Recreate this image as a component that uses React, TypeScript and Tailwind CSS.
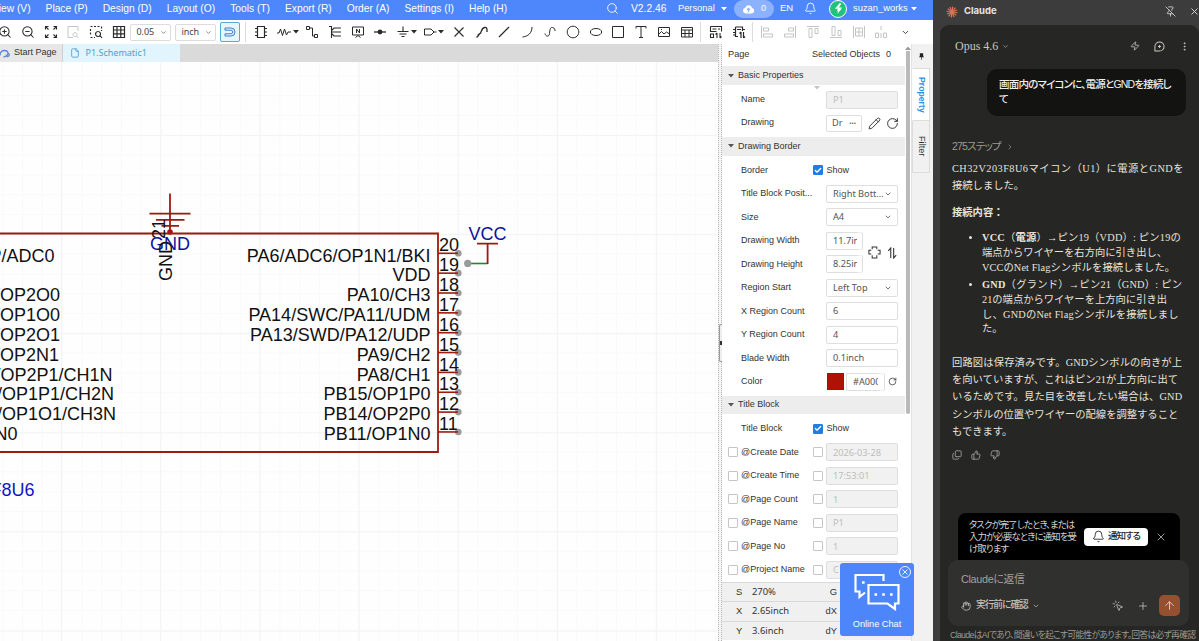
import type { ReactNode } from "react";
import clsx from "clsx";
import {
  ArrowUp,
  Bell,
  Check,
  ChevronDown,
  ChevronRight,
  Copy,
  EllipsisVertical,
  File,
  Hand,
  Maximize,
  MousePointerClick,
  Pencil,
  PinOff,
  Plus,
  RotateCw,
  Search,
  ThumbsDown,
  ThumbsUp,
  X,
  Zap,
  ZoomIn,
  ZoomOut,
} from "lucide-react";

const MENUS = [
  "View (V)",
  "Place (P)",
  "Design (D)",
  "Layout (O)",
  "Tools (T)",
  "Export (R)",
  "Order (A)",
  "Settings (I)",
  "Help (H)",
];

const ROW = 19.85;

const LEFT_PINS = [
  { row: 0, name: "P/ADC0", end: 54.5 },
  { row: 2, name: "P/OP2O0", end: 60 },
  { row: 3, name: "P/OP1O0", end: 60 },
  { row: 4, name: "P/OP2O1", end: 60 },
  { row: 5, name: "P/OP2N1", end: 59 },
  { row: 6, name: "/OP2P1/CH1N", end: 112.5 },
  { row: 7, name: "/OP1P1/CH2N", end: 114 },
  { row: 8, name: "/OP1O1/CH3N", end: 116 },
  { row: 9, name: "1N0", end: 17.5 },
];

const RIGHT_PINS = [
  { no: 20, name: "PA6/ADC6/OP1N1/BKI" },
  { no: 19, name: "VDD" },
  { no: 18, name: "PA10/CH3" },
  { no: 17, name: "PA14/SWC/PA11/UDM" },
  { no: 16, name: "PA13/SWD/PA12/UDP" },
  { no: 15, name: "PA9/CH2" },
  { no: 14, name: "PA8/CH1" },
  { no: 13, name: "PB15/OP1P0" },
  { no: 12, name: "PB14/OP2P0" },
  { no: 11, name: "PB11/OP1N0" },
];

const TITLE_FIELDS = [
  { label: "@Create Date", value: "2026-03-28" },
  { label: "@Create Time", value: "17:53:01" },
  { label: "@Page Count", value: "1" },
  { label: "@Page Name", value: "P1" },
  { label: "@Page No", value: "1" },
  { label: "@Project Name", value: "C" },
];

function Caret({ className }: { className?: string }) {
  return (
    <svg viewBox="0 0 6 4" className={clsx("h-[4px] w-[6px] shrink-0", className)}>
      <path d="M0 0h6L3 3.6z" fill="currentColor" />
    </svg>
  );
}

function MenuBar() {
  return (
    <div className="flex h-5 shrink-0 items-center bg-[#4e86fb] pb-[3px] text-[10.3px] text-white">
      <div className="-ml-[8px] flex w-[614px] shrink-0 gap-[15px] text-[10.25px] whitespace-nowrap">
        {MENUS.map((m) => (
          <span key={m}>{m}</span>
        ))}
      </div>
      <Search className="h-[13px] w-[13px] shrink-0" strokeWidth={1.6} />
      <span className="ml-[12px] w-[47px] shrink-0">V2.2.46</span>
      <span className="w-[43px] shrink-0 text-[9.3px]">Personal</span>
      <Caret className="mr-[7px]" />
      <div className="flex h-[18px] w-[40px] shrink-0 items-center justify-center gap-[6px] rounded-full bg-[#8db2fd] text-[9px]">
        <svg viewBox="0 0 14 11" className="h-[10px] w-[13px]">
          <path d="M4 10.5a3.3 3.3 0 0 1-.6-6.5A4 4 0 0 1 11 4.4a3.1 3.1 0 0 1-.6 6.1z" fill="#fff" />
          <path d="M7 9V5M5.3 6.500 7 4.800l1.700 1.700" stroke="#8db2fd" strokeWidth="1.200" fill="none" />
        </svg>
        0
      </div>
      <span className="ml-[6px] w-[24px] shrink-0 text-[9.5px]">EN</span>
      <Bell className="h-[13px] w-[13px] shrink-0" strokeWidth={1.6} />
      <div className="ml-[12px] flex h-[18px] w-[18px] shrink-0 items-center justify-center rounded-full border border-white bg-[#1fc47c]">
        <svg viewBox="0 0 10 12" className="h-[11px] w-[9px]">
          <path d="M6.500 0 1 6.200h3.200L3 9.200 9 5H5.500L8 .800zM5 7.500 3.500 12 9 5.800z" fill="#fff" />
        </svg>
      </div>
      <span className="ml-[6px] w-[58px] shrink-0 text-[9.4px]">suzan_works</span>
      <Caret />
    </div>
  );
}

function Tool({ children, faded }: { children: ReactNode; faded?: boolean }) {
  return (
    <div
      className={clsx(
        "flex w-[22.8px] shrink-0 items-center justify-center",
        faded ? "text-[#c4c4c4]" : "text-[#2a2a2a]"
      )}
    >
      {children}
    </div>
  );
}

function Glyph({ d, w = 1 }: { d: string; w?: number }) {
  return (
    <svg
      viewBox="0 0 14 14"
      className="h-[14px] w-[14px] shrink-0"
      fill="none"
      stroke="currentColor"
      strokeWidth={w}
    >
      <path d={d} />
    </svg>
  );
}

function Divider() {
  return <div className="h-[20px] w-px shrink-0 bg-[#dcdcdc]" />;
}

function ToolSelect({ value }: { value: string }) {
  return (
    <div className="mr-[4px] flex h-[17px] w-[41px] shrink-0 items-center justify-between rounded-[2px] border border-[#dcdcdc] pr-[3px] pl-[5px] font-['Noto_Sans',sans-serif] text-[9px] text-[#444]">
      {value}
      <ChevronDown className="h-[7px] w-[7px]" />
    </div>
  );
}

function Toolbar() {
  return (
    <div className="flex h-6 shrink-0 items-center bg-white">
      <div className="-ml-[6.4px] flex">
        <Tool>
          <ZoomIn className="h-[14px] w-[14px]" strokeWidth={1.8} />
        </Tool>
        <Tool>
          <ZoomOut className="h-[14px] w-[14px]" strokeWidth={1.8} />
        </Tool>
        <Tool>
          <Glyph d="M1.500 4.500v-3h3M2 2l2.500 2.500M9.500 1.500h3v3M12 2 9.500 4.500M1.500 9.500v3h3M2 12l2.500-2.500M12.500 9.500v3h-3M12 12 9.500 9.500" w={1.1} />
        </Tool>
        <Tool faded>
          <Glyph d="M12 6V1.500H2v11h5M9 7.500a2 2 0 1 0 .1 0M10.500 11l2 2" />
        </Tool>
        <Tool>
          <Glyph d="M1.500 1.500h2M5 1.500h2M8.500 1.500h2M12.500 1.500v2M1.500 4v2M1.500 7.500v2M12.500 5v1M1.500 12.500h2M5 12.500h1M9 6.500a2.500 2.500 0 1 0 .1 0M11 10.500l2 2.500" w={1.2} />
        </Tool>
        <Tool>
          <Glyph d="M1.500 1.500h11v11h-11zM1.500 5h11M1.500 8.800h11M5 1.500v11M8.800 1.500v11" w={1.2} />
        </Tool>
      </div>
      <ToolSelect value="0.05" />
      <ToolSelect value="inch" />
      <div className="flex h-[20px] w-[20px] shrink-0 items-center justify-center rounded-[2px] border border-[#58a9d8] bg-[#e8f5fd] text-[#3b7fd0]">
        <Glyph d="M2 3h6a4 4 0 0 1 0 8H2V8.800h6a1.800 1.800 0 0 0 0-3.600H2z" />
      </div>
      <div className="ml-[5px]">
        <Divider />
      </div>
      <div className="ml-[3px] flex">
        <Tool>
          <Glyph d="M3.500 1.500h7v11h-7zM1 3.500h2.500M1 7h2.500M1 10.500h2.500M10.500 3.500H13M10.500 7H13M10.500 10.500H13" w={1.2} />
        </Tool>
        <div className="flex w-[28.5px] items-center gap-[2px] pl-[4.4px] text-[#2a2a2a]">
          <Glyph d="M0 8h2l1.500-4 2 6.500L7.500 4l2 6 1.500-3h3" />
          <Caret />
        </div>
        <Tool>
          <Glyph d="M1.500 1.500h3v3h-3zM9.500 9.500h3v3h-3zM4.500 3h3v8h2" />
        </Tool>
        <Tool>
          <Glyph d="M3.500 1v12M3.500 5.500 6 3h7M3.500 7h9.500M3.500 8.500 6 11h7M1 1.500h2.500" w={1.1} />
        </Tool>
        <Tool>
          <Glyph d="M1.500 2h11v8h-11zM4.500 12.500 7 10.500l2.500 2M5.500 8V4l3 4V4" />
        </Tool>
        <Tool>
          <svg viewBox="0 0 14 14" className="h-[14px] w-[14px]">
            <path d="M1 7h12" stroke="currentColor" strokeWidth="1.300" />
            <circle cx="7" cy="7" r="2.400" fill="currentColor" />
          </svg>
        </Tool>
        <div className="flex w-[26.5px] items-center gap-[1px] pl-[4px] text-[#2a2a2a]">
          <Glyph d="M7 1.500V6M1.500 6.500h11M3.500 9h7M5.500 11.500h3" w={1.1} />
          <Caret />
        </div>
        <div className="flex w-[29px] items-center gap-[1px] pl-[4.4px] text-[#2a2a2a]">
          <Glyph d="M1.500 4H8l3 3-3 3H1.500zM11 7h2.500" />
          <Caret />
        </div>
        <Tool>
          <Glyph d="m2.500 2.500 9 9m0-9-9 9" w={1.1} />
        </Tool>
        <Tool>
          <Glyph d="M1.500 12.500 4 10m-1.500.5L5.500 8c1-1 1-5 4-5.500S12 5 12 7M4 9.500l2-2" w={1.3} />
        </Tool>
        <Tool>
          <Glyph d="m2 12 10-10" w={1.2} />
        </Tool>
        <Tool>
          <Glyph d="M12 2c0 6-4 9.500-9.500 10" />
        </Tool>
        <Tool>
          <Glyph d="M2 8.500c.5 3 4 4 4.500 0S7 2 9.500 2.500 12 5 12 6" />
        </Tool>
        <Tool>
          <Glyph d="M7 1.200a5.800 5.800 0 1 0 .01 0z" />
        </Tool>
        <Tool>
          <Glyph d="M7 3.500c-7.500 0-7.500 7 0 7s7.500-7 0-7z" />
        </Tool>
        <Tool>
          <Glyph d="M1.500 1.500h11v11h-11z" />
        </Tool>
        <Tool>
          <Glyph d="M2 3.500v-2h10v2M7 1.500v11M5 12.500h4" />
        </Tool>
        <Tool>
          <Glyph d="M1.500 2.500h11v9h-11zM1.500 9.500l3-3 2.500 2.500 2.500-2 3 2M4 4.500h1" />
        </Tool>
        <Tool>
          <Glyph d="M1.500 2.500h11v9.500h-11zM1.500 5h11M1.500 8.500h11M5 5v7M9 5v7" />
        </Tool>
      </div>
      <div className="mr-[3px] ml-[2.200px]">
        <Divider />
      </div>
      <Tool>
        <Glyph d="M1.500 1.500h11v5M1.500 1.500v5h6M3.500 4h4M9 4h2M1.500 9h3v3.500h-3zM8 8v5M8 8 6.500 9.500M11 8v5M11 13l1.500-1.500" w={1.1} />
      </Tool>
      <Tool>
        <Glyph d="M3.500 2h7v4M3.500 2v9.500H6M1 4.500h2.500M1 7.500h2.500M1 10h2.500M10.500 4.500H13M5 4.500h4M9 7v6M9 7 7.500 8.500M11.500 7v6M11.500 13l1.500-1.500" w={1.2} />
      </Tool>
      <div className="mr-[3px] ml-[2px]">
        <Divider />
      </div>
      <Tool faded>
        <Glyph d="M1.500 1v12M3.500 3h5v3h-5zM3.500 9h9v3h-9z" />
      </Tool>
      <Tool faded>
        <Glyph d="M12.500 1v12M5.500 3h5v3h-5zM1.500 9h9v3h-9z" />
      </Tool>
      <Tool faded>
        <Glyph d="M1 1.500h12M3 3.500h3v9H3zM9 3.500h3v5H9z" />
      </Tool>
      <Tool faded>
        <Glyph d="M1 12.500h12M3 1.500h3v9H3zM9 5.500h3v5H9z" />
      </Tool>
      <Tool faded>
        <Glyph d="M1.500 1v12M12.500 1v12M3.500 3h7v8h-7zM3.500 7h7M7 3v8" />
      </Tool>
      <Tool faded>
        <Glyph d="M1.500 8h3v4.500h-3zM9.500 8h3v4.500h-3zM7 1v4M7 8v5" />
      </Tool>
      <ChevronDown className="ml-[8px] h-[9px] w-[9px] shrink-0 text-[#333]" strokeWidth={2.5} />
    </div>
  );
}

function Tabs() {
  return (
    <div className="flex h-[18px] bg-[#dadada] text-[9px]">
      <div className="flex w-[63px] items-center gap-[4px] border-r border-[#cfcfcf] bg-[#e7e7e7] text-[#333]">
        <svg viewBox="0 0 10 9" className="h-[9px] w-[10px]" fill="none" stroke="#5b86d8" strokeWidth="1.300">
          <path d="M0 6.500C0 3 2 1.500 4.500 1.500S8 3 8 4.500 5 8 3.500 8M6.500 7.500c4 .5 3-4 1-3" />
        </svg>
        Start Page
      </div>
      <div className="flex w-[117px] items-center gap-[6px] bg-[#e2f4fe] pl-[6.500px] font-['Noto_Sans',sans-serif] text-[#4b9fd2]">
        <File className="h-[12px] w-[10px]" strokeWidth={2} />
        P1.Schematic1
      </div>
    </div>
  );
}

function Schematic() {
  return (
    <svg
      viewBox="0 62 718 579"
      className="h-[579px] w-[718px] bg-[#fefefe] font-['Liberation_Sans',Arial,sans-serif] text-[18px]"
    >
      <defs>
        <pattern id="minor" x="2.200" y="16" width="19.800" height="19.800" patternUnits="userSpaceOnUse">
          <path d="M.5 0v19.800M0 .5h19.800" stroke="#f9f9fa" />
        </pattern>
        <pattern id="major" x="61" y="36" width="99.200" height="99.100" patternUnits="userSpaceOnUse">
          <path d="M.5 0v99.100M0 .5h99.200" stroke="#f1f3f4" />
        </pattern>
      </defs>
      <rect y="62" width="718" height="579" fill="url(#minor)" />
      <rect y="62" width="718" height="579" fill="url(#major)" />

      {/* chip body */}
      <path d="M-2 233.500H438V452H-2" fill="none" stroke="#9e1a10" strokeWidth="1.800" />

      {RIGHT_PINS.map((pin, i) => (
        <g key={pin.no}>
          <circle cx="458.300" cy={253.3 + i * ROW} r="3.300" fill="#9a9a9a" />
          <path d={`M438 ${253.3 + i * ROW}h20`} stroke="#9e1a10" strokeWidth="1.600" />
          <text x="439" y={251.4 + i * ROW} fill="#111">
            {pin.no}
          </text>
          <text x="430.500" y={261.5 + i * ROW} textAnchor="end" fill="#111">
            {pin.name}
          </text>
        </g>
      ))}
      {LEFT_PINS.map((pin) => (
        <text key={pin.row} x={pin.end} y={261.5 + pin.row * ROW} textAnchor="end" fill="#111">
          {pin.name}
        </text>
      ))}

      {/* GND flag */}
      <path
        d="M170 193.500V232M149.500 213.600h41M156 219.800h28.500M161.500 225.800h17.500"
        stroke="#9e1a10"
        strokeWidth="1.800"
      />
      <circle cx="170" cy="232" r="2.800" fill="#9e1a10" />
      <text x="150" y="250" fill="#10109c">
        GND
      </text>
      <text transform="translate(164.500 239) rotate(-90)" fill="#111">
        21
      </text>
      <text transform="translate(172 281) rotate(-90)" fill="#111">
        GND
      </text>

      {/* VCC flag */}
      <path d="M468 263.500h19.500" stroke="#1c8a35" strokeWidth="1.600" />
      <circle cx="467.700" cy="263.400" r="3.600" fill="#9a9a9a" />
      <path d="M477 243.600h21M487.600 243.600v20.500" stroke="#9e1a10" strokeWidth="1.800" />
      <text x="468.500" y="240" fill="#10109c">
        VCC
      </text>

      <text x="34.500" y="495.500" textAnchor="end" fill="#1414c8">
        CH32V203F8U6
      </text>
    </svg>
  );
}

function Section({ title }: { title: string }) {
  return (
    <div className="mt-[2.200px] mb-[2.900px] flex h-[18.600px] items-center gap-[4px] bg-[#ededed] pl-[6px]">
      <Caret className="text-[#555]" />
      {title}
    </div>
  );
}

function Box({ on }: { on?: boolean }) {
  return (
    <span
      className={clsx(
        "flex h-[10px] w-[10px] shrink-0 items-center justify-center rounded-[1px] border",
        on ? "border-[#1b7fe6] bg-[#1b7fe6]" : "border-[#c6c6c6] bg-white"
      )}
    >
      {on && <Check className="h-[9px] w-[9px] text-white" strokeWidth={4} />}
    </span>
  );
}

function Field({ label, children }: { label: string; children: ReactNode }) {
  return (
    <div className="flex h-[23.5px] items-center pl-[19px]">
      <span className="w-[85px] shrink-0 whitespace-nowrap">{label}</span>
      {children}
    </div>
  );
}

function Input({
  value,
  size = "w-[72px]",
  disabled,
  select,
}: {
  value: string;
  size?: string;
  disabled?: boolean;
  select?: boolean;
}) {
  return (
    <span
      className={clsx(
        "flex h-[18px] shrink-0 items-center justify-between overflow-hidden rounded-[2px] border border-[#dedede] pl-[6px] font-['Noto_Sans',sans-serif] text-[9.2px] whitespace-nowrap",
        size,
        disabled ? "bg-[#f1f1f1] text-[#bdbdbd]" : "bg-white text-[#555]"
      )}
    >
      {value}
      {select && <ChevronDown className="mr-[5px] h-[8px] w-[8px] shrink-0" strokeWidth={2.5} />}
    </span>
  );
}

function ShowField({ label }: { label: string }) {
  return (
    <div className="flex h-[23.5px] items-center pl-[19px]">
      <span className="w-[72px]">{label}</span>
      <Box on />
      <span className="ml-[3.500px]">Show</span>
    </div>
  );
}

function PropertyPanel() {
  return (
    <div className="flex w-[190px] shrink-0 flex-col border-r border-[#e2e2e2] bg-white text-[9px] text-[#333]">
      <div className="flex h-[538px] shrink-0 overflow-hidden">
        <div className="w-[183px] shrink-0">
          <div className="flex h-[20.200px] items-center pt-[2px] pl-[6px]">
            <span className="w-[84px] text-[9.200px]">Page</span>
            <span className="w-[74px]">Selected Objects</span>
            <span>0</span>
          </div>
          <Section title="Basic Properties" />
          <div className="relative">
            <Caret className="absolute -top-[2px] left-[92px] text-[#c4c4c4]" />
            <Field label="Name">
              <Input value="P1" disabled />
            </Field>
          </div>
          <Field label="Drawing">
            <span className="flex h-[17px] w-[36px] items-center justify-between rounded-[2px] border border-[#dedede] px-[5px] font-['Noto_Sans',sans-serif] text-[9.200px] text-[#555]">
              Dr <span className="text-[8px] font-bold">···</span>
            </span>
            <Pencil className="ml-[6px] h-[13px] w-[13px]" strokeWidth={1.8} />
            <RotateCw className="ml-[5px] h-[13px] w-[13px]" strokeWidth={1.8} />
          </Field>

          <Section title="Drawing Border" />
          <ShowField label="Border" />
          <Field label="Title Block Posit...">
            <Input value="Right Bott..." select />
          </Field>
          <Field label="Size">
            <Input value="A4" select />
          </Field>
          <div className="flex">
            <div>
              <Field label="Drawing Width">
                <Input value="11.7inch" size="w-[36px] border-r-[5px]! border-r-white! shadow-[1px_0_0_#dedede]" />
              </Field>
              <Field label="Drawing Height">
                <Input value="8.25inch" size="w-[36px] border-r-[5px]! border-r-white! shadow-[1px_0_0_#dedede]" />
              </Field>
            </div>
            <div className="flex items-center gap-[6px] pl-[6px]">
              <svg viewBox="0 0 14 14" className="h-[13px] w-[13px]" fill="none" stroke="#333" strokeWidth="1.100">
                <path d="M4.500 3.500V1h5v2.500M3.500 4.500H1v4h2.500M10.500 4.500H13v4h-2.500M4.500 10v3h5v-3" />
              </svg>
              <svg viewBox="0 0 12 14" className="h-[12px] w-[10px]" fill="none" stroke="#333" strokeWidth="1.300">
                <path d="M4.500 13V1L1.500 4.500M8 1v12l3-3.500" />
              </svg>
            </div>
          </div>
          <Field label="Region Start">
            <Input value="Left Top" select />
          </Field>
          <Field label="X Region Count">
            <Input value="6" />
          </Field>
          <Field label="Y Region Count">
            <Input value="4" />
          </Field>
          <Field label="Blade Width">
            <Input value="0.1inch" />
          </Field>
          <Field label="Color">
            <span className="mr-[2px] ml-[1px] h-[17px] w-[17px] border border-[#8f1a0c] bg-[#ad1203]" />
            <Input value="#A00000" size="w-[38px] border-r-[6px]! border-r-white! shadow-[1px_0_0_#dedede]" />
            <RotateCw className="ml-[4px] h-[9px] w-[9px]" />
          </Field>

          <Section title="Title Block" />
          <ShowField label="Title Block" />
          {TITLE_FIELDS.map((f) => (
            <div key={f.label} className="flex h-[23.5px] items-center pl-[6px]">
              <Box />
              <span className="ml-[3px] w-[72px] whitespace-nowrap">{f.label}</span>
              <Box />
              <span className="w-[3px]" />
              <Input value={f.value} disabled />
            </div>
          ))}
        </div>
        <div className="flex w-[5px] flex-col items-center">
          <Caret className="mt-[2px] rotate-180 text-[#999]" />
          <div className="mt-px h-[363px] w-[4px] rounded-b-full bg-[#b9b9b9]" />
        </div>
      </div>
      {[
        ["S", "270%", "G"],
        ["X", "2.65inch", "dX"],
        ["Y", "3.6inch", "dY"],
      ].map(([k, v, d]) => (
        <div
          key={k}
          className="flex h-[19.300px] shrink-0 items-center border-t border-[#d9d9d9] bg-[#f0f0f0] pl-[14px] text-[9.400px]"
        >
          <span className="w-[16px]">{k}</span>
          <span className="w-[69px] font-['Noto_Sans',sans-serif]">{v}</span>
          <span className="w-[16px] text-right">{d}</span>
        </div>
      ))}
    </div>
  );
}

function SideTabs() {
  return (
    <div className="flex w-[21px] shrink-0 flex-col bg-[#f1f1f1] text-[9.200px]">
      <div className="flex h-[24px] items-center justify-center pr-[2px]">
        <svg viewBox="0 0 6 8" className="h-[7px] w-[5px]">
          <path d="M1 0h4v3.500l1 1.500H0l1-1.500zM2.600 5h.8v3h-.8z" fill="#222" />
        </svg>
      </div>
      <div className="flex h-[53px] w-[18px] items-center justify-center border border-[#dcdcdc] border-l-white bg-white text-[8.700px] font-bold text-[#2b90e8]">
        <span className="[text-orientation:sideways] [writing-mode:vertical-rl]">Property</span>
      </div>
      <div className="flex h-[52px] w-[18px] items-center justify-center border border-t-0 border-[#dcdcdc] text-[#333]">
        <span className="[text-orientation:sideways] [writing-mode:vertical-rl]">Filter</span>
      </div>
    </div>
  );
}

function OnlineChat() {
  return (
    <div className="absolute top-[563px] left-[840px] flex h-[73px] w-[74px] flex-col items-center rounded-[3px] bg-[#4d86fb] text-[9.200px] text-white">
      <svg viewBox="0 0 46 38" className="mt-[10px] h-[38px] w-[46px]" fill="none" stroke="#fff" strokeWidth="2.200">
        <path d="M11 19.500 5.500 24v-5.500H1.500V2h28v6" />
        <path d="M14.500 12h30v18.500h-3.500v5.500l-7.500-5.500h-19z" />
        <path d="M20.500 21.500h2.600M28.200 21.500h2.600M36 21.500h2.600M8 9.500h2.600" strokeWidth="2.600" />
      </svg>
      <span className="mt-[7px]">Online Chat</span>
      <svg
        viewBox="0 0 12 12"
        className="absolute top-[3px] right-[3px] h-[12px] w-[12px]"
        fill="none"
        stroke="#fff"
        strokeWidth=".9"
      >
        <circle cx="6" cy="6" r="5.500" />
        <path d="m3.500 3.500 5 5m0-5-5 5" />
      </svg>
    </div>
  );
}

function Editor() {
  return (
    <div className="relative flex w-[933px] shrink-0 flex-col overflow-hidden bg-white font-['Liberation_Sans',Arial,sans-serif]">
      <MenuBar />
      <Toolbar />
      <div className="flex flex-1">
        <div className="flex w-[718px] shrink-0 flex-col">
          <Tabs />
          <Schematic />
        </div>
        <div className="flex w-[4px] shrink-0 items-center border-r border-l border-dotted border-[#b5b5b5] bg-[#f4f4f4]">
          <div className="flex h-[38px] w-[4px] items-center rounded-l-[2px] border border-r-0 border-[#999] bg-[#eee]">
            <div className="h-[4px] w-[2px] bg-[#333]" />
          </div>
        </div>
        <PropertyPanel />
        <SideTabs />
      </div>
      <OnlineChat />
    </div>
  );
}

function Starburst() {
  return (
    <svg viewBox="-6 -6 12 12" className="h-[12px] w-[12px]" stroke="#d97757" strokeWidth="1.200">
      {[0, 30, 60, 90, 120, 150].map((a) => (
        <path key={a} d="M-5.500 0h11" transform={`rotate(${a + 8})`} />
      ))}
    </svg>
  );
}

function Line({ children, className }: { children: ReactNode; className?: string }) {
  return <span className={clsx("block whitespace-nowrap", className)}>{children}</span>;
}

function Answer() {
  return (
    <div className="pl-[12px] font-['Liberation_Serif','Noto_Sans_CJK_JP',serif] text-[10.300px] text-[#e6e4dc]">
      <div className="leading-[17.400px]">
        <Line className="tracking-[0.46px]">CH32V203F8U6マイコン（U1）に電源とGNDを</Line>
        <Line>接続しました。</Line>
      </div>
      <p className="mt-[9px] leading-[17.400px] font-bold">接続内容：</p>
      <ul className="mt-[10px] list-disc pl-[30px] leading-[14.700px]">
        <li>
          <Line className="tracking-[0.2px]">
            <b>VCC</b>（<b>電源</b>）→ピン19（VDD）: ピン19の
          </Line>
          <Line>端点からワイヤーを右方向に引き出し、</Line>
          <Line className="tracking-[0.1px]">VCCのNet Flagシンボルを接続しました。</Line>
        </li>
        <li className="mt-[3px]">
          <Line className="tracking-[0.24px]">
            <b>GND</b>（グランド）→ピン21（GND）: ピン
          </Line>
          <Line>21の端点からワイヤーを上方向に引き出</Line>
          <Line className="tracking-[0.2px]">し、GNDのNet Flagシンボルを接続しまし</Line>
          <Line>た。</Line>
        </li>
      </ul>
      <div className="mt-[16.500px] leading-[17.400px]">
        <Line className="tracking-[0.13px]">回路図は保存済みです。GNDシンボルの向きが上</Line>
        <Line>を向いていますが、これはピン21が上方向に出て</Line>
        <Line className="tracking-[0.13px]">いるためです。見た目を改善したい場合は、GND</Line>
        <Line>シンボルの位置やワイヤーの配線を調整すること</Line>
        <Line>もできます。</Line>
      </div>
      <div className="mt-[9px] flex gap-[9px] text-[#a5a39c]">
        <Copy className="h-[10px] w-[10px] rotate-180 -scale-x-100" />
        <ThumbsUp className="h-[10px] w-[10px]" />
        <ThumbsDown className="h-[10px] w-[10px]" />
      </div>
    </div>
  );
}

function Composer() {
  return (
    <div className="mt-auto [font-feature-settings:'palt']">
      <div className="ml-[18px] flex h-[47px] w-[222px] items-center rounded-t-[8px] bg-black pl-[11px]">
        <div className="w-[115px] text-[9.400px] leading-[12px] tracking-[-0.85px] text-[#d6d4cc]">
          <Line>タスクが完了したとき、または</Line>
          <Line>入力が必要なときに通知を受</Line>
          <Line>け取ります</Line>
        </div>
        <div className="flex h-[18px] w-[64px] items-center justify-center gap-[3px] rounded-[4px] bg-white text-[9.500px] font-medium tracking-[-1px] text-[#222]">
          <Bell className="h-[13px] w-[13px]" strokeWidth={1.6} />
          通知する
        </div>
        <X className="ml-[7px] h-[12px] w-[12px] text-[#c4c2ba]" strokeWidth={1.6} />
      </div>
      <div className="ml-[8px] flex h-[66px] w-[241px] flex-col rounded-[10px] bg-[#30302f] px-[13px] pt-[10px]">
        <span className="text-[10.800px] leading-[19px] tracking-[-0.3px] text-[#a3a19a]">Claudeに返信</span>
        <div className="mt-[6px] -mr-[4px] flex h-[21px] items-center text-[#c2c0b8]">
          <Hand className="mr-[5px] h-[10px] w-[10px]" />
          <span className="text-[9.700px] font-medium tracking-[-1px]">実行前に確認</span>
          <ChevronDown className="ml-[4px] h-[8px] w-[8px]" />
          <MousePointerClick className="ml-auto h-[12px] w-[12px]" strokeWidth={1.6} />
          <Plus className="mr-[10px] ml-[13px] h-[12px] w-[12px]" strokeWidth={1.6} />
          <div className="flex h-[21px] w-[21px] items-center justify-center rounded-[5px] bg-[#96502f]">
            <ArrowUp className="h-[13px] w-[13px] text-[#dcc8bc]" strokeWidth={1.8} />
          </div>
        </div>
      </div>
      <p className="h-[15px] pl-[10px] text-[8.800px] leading-[19px] tracking-[-0.7px] whitespace-nowrap text-[#9c9a92]">
        ClaudeはAIであり、間違いを起こす可能性があります。回答は必ず再確認
      </p>
    </div>
  );
}

function ClaudePanel() {
  return (
    <div className="flex w-[266px] shrink-0 flex-col bg-[#3c3c3c] pl-[7px] font-['Liberation_Sans','Noto_Sans_CJK_JP',sans-serif]">
      <div className="flex h-[25px] shrink-0 items-center pb-[2px] pl-[6px]">
        <Starburst />
        <span className="ml-[6px] font-['Inter',sans-serif] text-[9.500px] font-bold text-[#e4e4e4]">Claude</span>
        <PinOff className="mr-[13px] ml-auto h-[11px] w-[11px] shrink-0 text-[#ccc]" />
        <X className="-mr-[1px] h-[11px] w-[11px] shrink-0 text-[#ddd]" />
      </div>
      <div className="flex flex-1 flex-col rounded-t-[9px] bg-[#262624]">
        <div className="flex h-[42px] items-center pr-[9px] pl-[15px] text-[#c9c7bf]">
          <span className="font-['Liberation_Serif',serif] text-[12px]">Opus 4.6</span>
          <ChevronDown className="ml-[4px] h-[7px] w-[7px]" />
          <Zap className="mr-[14px] ml-auto h-[10px] w-[10px]" />
          <svg
            viewBox="0 0 12 12"
            className="mr-[14px] h-[11px] w-[11px]"
            fill="none"
            stroke="currentColor"
            strokeWidth="1.100"
          >
            <path d="M1 11V6a5 5 0 1 1 5 5zM4.300 6h3.400M6 4.300v3.400" />
          </svg>
          <EllipsisVertical className="h-[11px] w-[11px]" />
        </div>
        <div className="mt-[2px] ml-[47px] h-[47px] w-[199px] rounded-[10px] bg-[#131312] pt-[8px] pl-[12px] text-[10.500px] leading-[15px] font-medium tracking-[-0.8px] text-[#f2f0e8] [font-feature-settings:'palt']">
          <Line>画面内のマイコンに、電源とGNDを接続し</Line>
          <Line>て</Line>
        </div>
        <div className="mt-[22px] flex h-[17px] items-center gap-[5px] pl-[12px] text-[10.600px] tracking-[-0.9px] text-[#9c9a92] [font-feature-settings:'palt']">
          275ステップ
          <ChevronRight className="h-[8px] w-[8px]" />
        </div>
        <div className="h-[5px]" />
        <Answer />
        <Composer />
      </div>
    </div>
  );
}

export default function App() {
  return (
    <div className="flex h-[641px] w-[1199px] overflow-hidden">
      <Editor />
      <ClaudePanel />
    </div>
  );
}
